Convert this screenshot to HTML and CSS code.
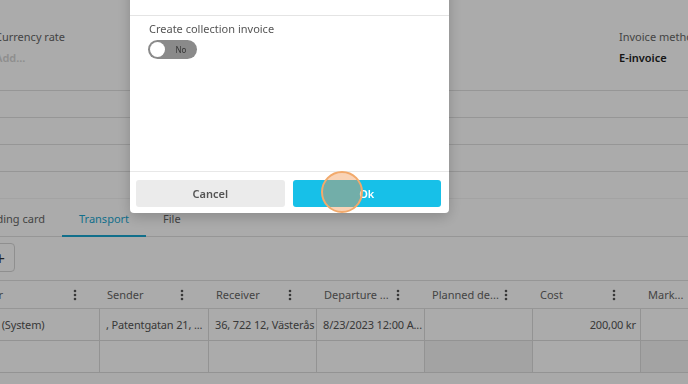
FILE: index.html
```html
<!DOCTYPE html>
<html lang="en">
<head>
    <meta charset="UTF-8">
    <meta name="viewport" content="width=device-width, initial-scale=1.0">
    <title>Order - Transport</title>
    <link rel="stylesheet" href="styles.css">
</head>
<body>
    <div class="page">
        <section class="fields">
            <div class="field">
                <span class="field-label">Currency rate</span>
                <span class="field-value placeholder">Add...</span>
            </div>
            <div class="field">
                <span class="field-label">Invoice method</span>
                <span class="field-value">E-invoice</span>
            </div>
        </section>
        <div class="blank-row"></div>
        <div class="blank-row"></div>
        <div class="blank-row"></div>
        <div class="spacer"></div>

        <nav class="tabs">
            <a class="tab first">Loading card</a>
            <a class="tab active">Transport</a>
            <a class="tab">File</a>
        </nav>

        <div class="toolbar">
            <button class="add-btn">+</button>
        </div>

        <div class="grid">
            <div class="th"><span>Carrier</span><svg class="kebab" viewBox="0 0 4 12"><circle cx="2" cy="2" r="1.3"/><circle cx="2" cy="6" r="1.3"/><circle cx="2" cy="10" r="1.3"/></svg></div>
            <div class="th"><span>Sender</span><svg class="kebab" viewBox="0 0 4 12"><circle cx="2" cy="2" r="1.3"/><circle cx="2" cy="6" r="1.3"/><circle cx="2" cy="10" r="1.3"/></svg></div>
            <div class="th"><span>Receiver</span><svg class="kebab" viewBox="0 0 4 12"><circle cx="2" cy="2" r="1.3"/><circle cx="2" cy="6" r="1.3"/><circle cx="2" cy="10" r="1.3"/></svg></div>
            <div class="th"><span>Departure ...</span><svg class="kebab" viewBox="0 0 4 12"><circle cx="2" cy="2" r="1.3"/><circle cx="2" cy="6" r="1.3"/><circle cx="2" cy="10" r="1.3"/></svg></div>
            <div class="th"><span>Planned de...</span><svg class="kebab" viewBox="0 0 4 12"><circle cx="2" cy="2" r="1.3"/><circle cx="2" cy="6" r="1.3"/><circle cx="2" cy="10" r="1.3"/></svg></div>
            <div class="th"><span>Cost</span><svg class="kebab" viewBox="0 0 4 12"><circle cx="2" cy="2" r="1.3"/><circle cx="2" cy="6" r="1.3"/><circle cx="2" cy="10" r="1.3"/></svg></div>
            <div class="th"><span>Mark...</span></div>

            <div class="td">Admin (System)</div>
            <div class="td">, Patentgatan 21, ...</div>
            <div class="td">36, 722 12, Västerås</div>
            <div class="td">8/23/2023 12:00 A...</div>
            <div class="td"></div>
            <div class="td num">200,00 kr</div>
            <div class="td"></div>

            <div class="td"></div>
            <div class="td"></div>
            <div class="td"></div>
            <div class="td"></div>
            <div class="td readonly"></div>
            <div class="td"></div>
            <div class="td readonly"></div>
        </div>
        <div class="scroll-track"></div>
    </div>

    <div class="overlay"></div>

    <div class="modal">
        <div class="modal-header">
            <h2>Create invoice</h2>
        </div>
        <div class="modal-body">
            <label class="option-label">Create collection invoice</label>
            <div class="toggle">
                <span class="knob"></span>
                <span class="toggle-text">No</span>
            </div>
        </div>
        <div class="modal-footer">
            <button class="btn btn-cancel">Cancel</button>
            <button class="btn btn-ok">Ok</button>
            <span class="click-marker"></span>
        </div>
    </div>
</body>
</html>
```

FILE: styles.css
```css
html, body {
    margin: 0;
    padding: 0;
    height: 100%;
    overflow: hidden;
}
body {
    font-family: 'Noto Sans', 'Open Sans', sans-serif;
    font-size: 11px;
    color: #555;
    background-color: #ffffff;
}
.page {
    width: 688px;
}
.fields {
    display: grid;
    grid-template-columns: 624px 140px;
    margin-left: -5px;
    height: 90px;
    border-bottom: 1px solid #e0e0e0;
}
.field {
    display: flex;
    flex-direction: column;
    gap: 7px;
    padding-top: 30px;
    white-space: nowrap;
}
.field-label, .field-value {
    line-height: 14px;
}
.field-label {
    color: #666;
}
.field-value {
    color: #222;
    font-weight: 600;
}
.field-value.placeholder {
    color: #d4d4d4;
}
.blank-row {
    height: 26px;
    border-bottom: 1px solid #e0e0e0;
}
.spacer {
    height: 26px;
    border-bottom: 1px solid #f3f3f3;
}
.tabs {
    display: flex;
    height: 37px;
    margin-left: -40px;
    border-bottom: 1px solid #e0e0e0;
}
.tab {
    padding: 13px 17px 0;
    line-height: 14px;
    color: #666;
    white-space: nowrap;
    box-sizing: border-box;
}
.tab.first {
    width: 102px;
    text-align: right;
}
.tab.active {
    color: #1aa6cf;
    border-bottom: 2px solid #1aa6cf;
    margin-bottom: -1px;
}
.toolbar {
    height: 43px;
    padding-top: 6px;
    box-sizing: border-box;
    margin-left: -15px;
}
.add-btn {
    width: 30px;
    height: 29px;
    padding: 0;
    border: 1px solid #d6d6d6;
    border-radius: 4px;
    background-color: #fff;
    color: #333;
    font-family: inherit;
    font-size: 18px;
    line-height: 26px;
}
.grid {
    display: grid;
    grid-template-columns: 140px 109px 108px 108px 108px 108px 108px;
    margin-left: -40px;
    border-top: 1px solid #e0e0e0;
}
.th {
    display: flex;
    align-items: center;
    justify-content: space-between;
    height: 27px;
    padding: 0 25px 0 7px;
    border-bottom: 1px solid #e0e0e0;
    color: #666;
    white-space: nowrap;
}
.th:first-child {
    padding-left: 0;
    padding-right: 23px;
    justify-content: flex-end;
    gap: 70px;
}
.kebab {
    width: 4px;
    height: 12px;
    fill: #555;
}
.td {
    height: 31px;
    line-height: 31px;
    padding: 0 5px 0 6px;
    border-right: 1px solid #dcdcdc;
    border-bottom: 1px solid #dcdcdc;
    white-space: nowrap;
    overflow: hidden;
    letter-spacing: -0.15px;
    color: #555;
}
.grid > .td:nth-child(7n+1) {
    text-align: right;
    padding-right: 56px;
}
.td.num {
    text-align: right;
    padding-right: 4px;
}
.td.readonly {
    background-color: #f4f4f4;
}
.scroll-track {
    height: 13px;
    background-color: #fdfdfd;
}
.overlay {
    position: fixed;
    inset: 0;
    background-color: rgba(0, 0, 0, 0.33);
}
.modal {
    position: fixed;
    left: 130px;
    top: -40px;
    width: 319px;
    background-color: #fff;
    border-radius: 4px;
    box-shadow: 0 4px 14px rgba(0, 0, 0, 0.2);
}
.modal-header {
    height: 56px;
    display: flex;
    align-items: flex-end;
    padding: 0 0 13px 7px;
    box-sizing: border-box;
    border-bottom: 1px solid #e4e4e4;
}
.modal-header h2 {
    margin: 0;
    font-size: 13px;
    line-height: 16px;
    font-weight: 600;
    color: #c4c4c4;
}
.modal-body {
    height: 155px;
    padding: 6px 19px 0;
    box-sizing: border-box;
}
.option-label {
    display: block;
    line-height: 14px;
    color: #555;
}
.toggle {
    display: flex;
    align-items: center;
    width: 49px;
    height: 19px;
    margin-top: 4px;
    margin-left: -1px;
    border-radius: 10px;
    background-color: #8a8a8a;
    box-sizing: border-box;
    padding-left: 2px;
}
.knob {
    width: 15px;
    height: 15px;
    border-radius: 50%;
    background-color: #fff;
}
.toggle-text {
    flex: 1;
    text-align: center;
    font-size: 8px;
    color: #333;
}
.modal-footer {
    position: relative;
    display: flex;
    gap: 8px;
    padding: 8px 8px 6px 6px;
    border-top: 1px solid #e8e8e8;
}
.btn {
    flex: 1;
    height: 27px;
    border: none;
    border-radius: 3px;
    font-family: inherit;
    font-size: 11px;
    font-weight: 600;
}
.btn-cancel {
    background-color: #ebebeb;
    color: #555;
}
.btn-ok {
    background-color: #17c0e8;
    color: #fff;
}
.click-marker {
    position: absolute;
    left: 191px;
    top: -1px;
    width: 38px;
    height: 38px;
    border-radius: 50%;
    border: 2px solid #f2aa6c;
    background-color: rgba(240, 150, 80, 0.42);
}
```
